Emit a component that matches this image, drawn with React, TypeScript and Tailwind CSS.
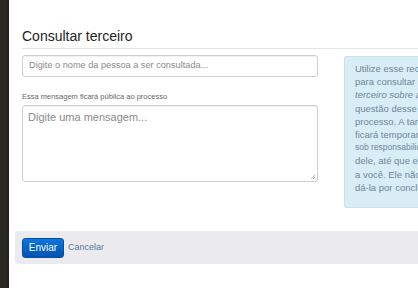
import React from "react"

const INFO_LINES: { text: string; italic?: boolean; small?: boolean }[] = [
  { text: "Utilize esse recurso" },
  { text: "para consultar um" },
  { text: "terceiro sobre alguma", italic: true },
  { text: "questão desse" },
  { text: "processo. A tarefa" },
  { text: "ficará temporariamente" },
  { text: "sob responsabilidade", small: true },
  { text: "dele, até que ele" },
  { text: "a você. Ele não" },
  { text: "dá-la por concluída." },
]

export default function App() {
  return (
    <div className="flex w-[418px] h-[288px] overflow-hidden bg-white" style={{ fontFamily: '"Liberation Sans", Arial, sans-serif' }}>
      {/* backdrop edge */}
      <div className="w-[9px] shrink-0 bg-[#2a2922]" />

      <div className="flex-1 flex flex-col bg-white shadow-[-1px_0_2px_rgba(0,0,0,0.3)]">
        {/* header */}
        <div className="ml-[13px] pt-[27px] pb-[3px] border-b border-[#e5e5e5]">
          <h3 className="text-[14px] leading-[18px] text-[#222]">Consultar terceiro</h3>
        </div>

        {/* body */}
        <div className="flex ml-[13px] pt-[6px] h-[176px]">
          <div className="w-[296px] shrink-0 flex flex-col">
            <div className="h-[22px] border border-[#cfcfcf] rounded-[3px] flex items-center px-[6px] text-[9.2px] text-[#8a8a8a] shadow-[inset_0_1px_1px_rgba(0,0,0,0.06)]">
              Digite o nome da pessoa a ser consultada...
            </div>
            <div className="mt-[15px] text-[7.5px] leading-[10px] text-[#666]">Essa mensagem ficará pública ao processo</div>
            <div className="mt-[3px] h-[77px] border border-[#cfcfcf] rounded-[3px] relative px-[5px] py-[3px] text-[11px] text-[#8a8a8a] shadow-[inset_0_1px_1px_rgba(0,0,0,0.06)]">
              Digite uma mensagem...
              <svg className="absolute right-[1px] bottom-[1px]" width="6" height="6" viewBox="0 0 6 6">
                <path d="M5 1L1 5M5 3L3 5" stroke="#aaa" strokeWidth="0.8" />
              </svg>
            </div>
          </div>

          <div className="ml-[26px] mt-[1px] w-[90px] h-[152px] shrink-0 bg-[#d9edf7] border border-[#c4e3ef] rounded-l-[3px] border-r-0 pl-[10px] pt-[5px] overflow-hidden">
            {INFO_LINES.map((l, i) => (
              <div
                key={i}
                className={`whitespace-nowrap leading-[13.2px] text-[#6b8799] ${l.small ? "text-[8.5px]" : "text-[9.5px]"} ${l.italic ? "italic" : ""}`}
              >
                {l.text}
              </div>
            ))}
          </div>
        </div>

        {/* footer */}
        <div className="ml-[6px] mt-[6px] h-[33px] bg-[#ebebef] rounded-l-[3px] flex items-center pl-[7px] gap-[4px]">
          <button className="h-[20px] w-[42px] rounded-[3px] bg-gradient-to-b from-[#1176dd] to-[#0054b0] border border-[#0050a8] text-white text-[10px] leading-none">
            Enviar
          </button>
          <span className="text-[9px] text-[#5a7896]">Cancelar</span>
        </div>
      </div>
    </div>
  )
}
